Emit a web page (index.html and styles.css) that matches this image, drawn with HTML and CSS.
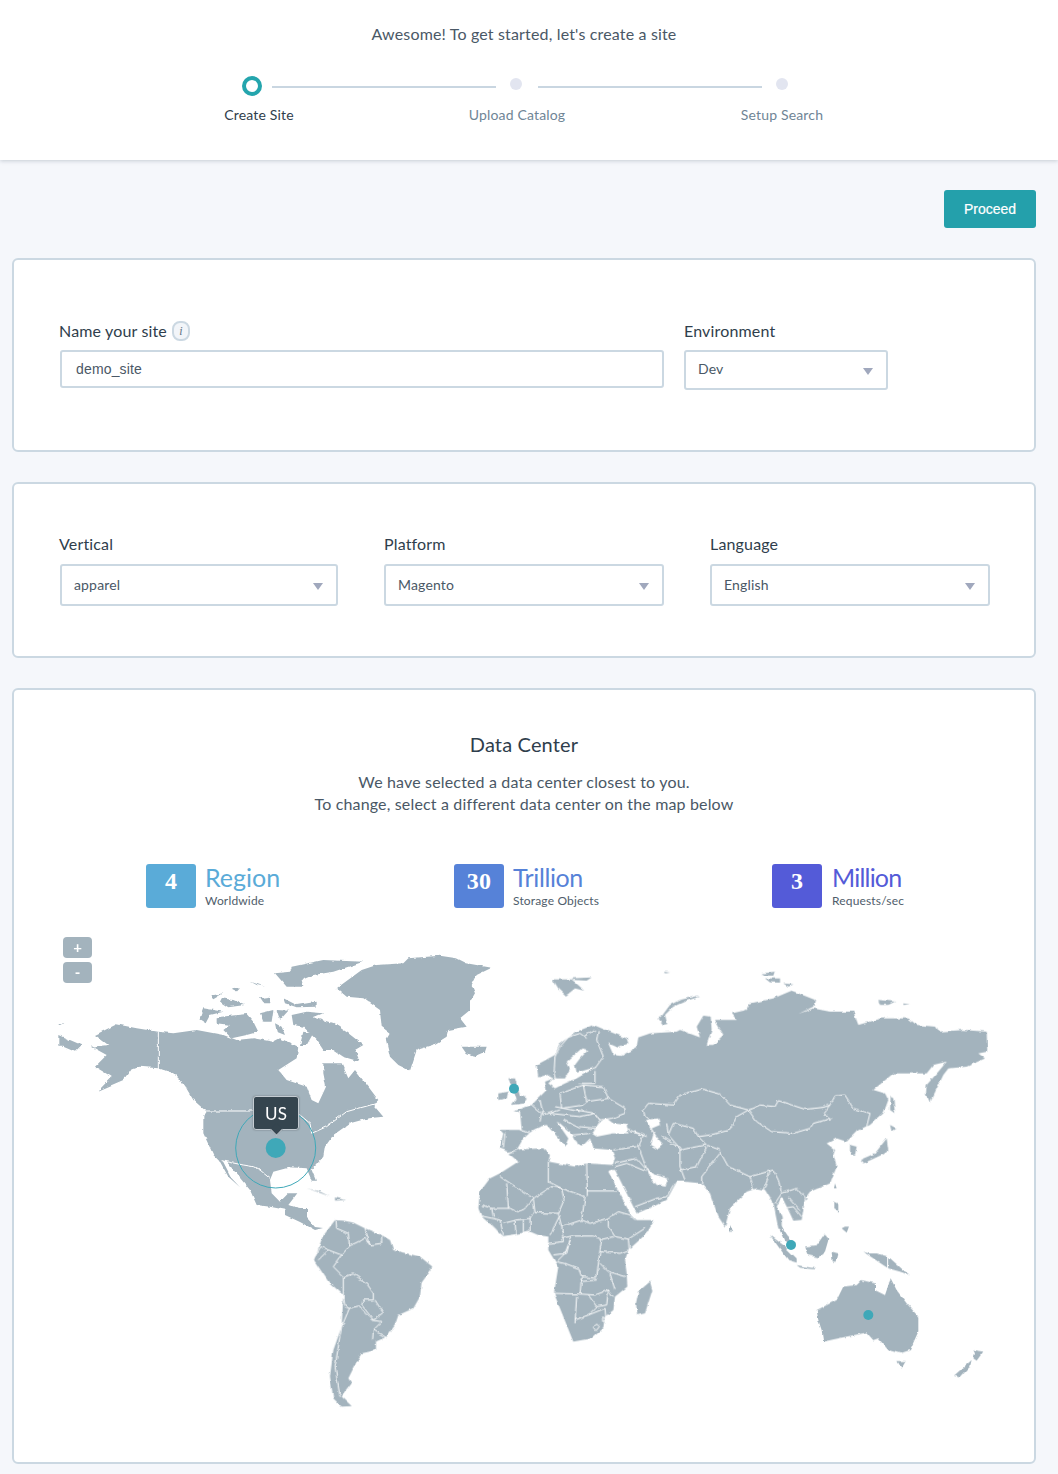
FILE: index.html
```html
<!DOCTYPE html>
<html lang="en">
<head>
<meta charset="utf-8">
<title>Create Site</title>
<link rel="stylesheet" href="styles.css">
</head>
<body>
<header class="top">
  <h1 class="intro">Awesome! To get started, let's create a site</h1>
  <div class="track">
    <span class="dot-active"></span>
    <span class="line"></span>
    <span class="dot"></span>
    <span class="line line-2"></span>
    <span class="dot"></span>
  </div>
  <div class="steps">
    <span class="step step-on">Create Site</span>
    <span class="step step-b">Upload Catalog</span>
    <span class="step step-c">Setup Search</span>
  </div>
</header>
<main class="main">
  <div class="actions"><button class="proceed">Proceed</button></div>
  <section class="card card-name">
    <div class="row-name">
      <div>
        <div class="label label-first">Name your site <span class="info">i</span></div>
        <div class="input">demo_site</div>
      </div>
      <div>
        <div class="label">Environment</div>
        <div class="select select-env">Dev</div>
      </div>
    </div>
  </section>
  <section class="card card-meta">
    <div class="row-meta">
      <div><div class="label label-first">Vertical</div><div class="select select-tall">apparel</div></div>
      <div><div class="label">Platform</div><div class="select select-tall">Magento</div></div>
      <div><div class="label">Language</div><div class="select select-tall">English</div></div>
    </div>
  </section>
  <section class="card card-dc">
    <h2 class="dc-title">Data Center</h2>
    <p class="dc-text">We have selected a data center closest to you.<br>To change, select a different data center on the map below</p>
    <div class="stats">
      <div class="stat stat-a"><span class="badge">4</span><div><div class="big">Region</div><div class="small">Worldwide</div></div></div>
      <div class="stat stat-b"><span class="badge">30</span><div><div class="big">Trillion</div><div class="small">Storage Objects</div></div></div>
      <div class="stat stat-c"><span class="badge">3</span><div><div class="big">Million</div><div class="small">Requests/sec</div></div></div>
    </div>
    <div class="map-wrap">
      <button class="zoom zoom-in">+</button>
      <button class="zoom zoom-out">-</button>
      <svg class="map" viewBox="58 950 930 460" width="930" height="460" aria-label="World map">
        <defs>
          <filter id="rough" filterUnits="userSpaceOnUse" x="58" y="950" width="930" height="460" color-interpolation-filters="sRGB">
            <feTurbulence type="fractalNoise" baseFrequency="0.14" numOctaves="3" seed="7" result="n"/>
            <feDisplacementMap in="SourceGraphic" in2="n" scale="3.2" xChannelSelector="R" yChannelSelector="G"/>
          </filter>
        </defs>
        <g class="rough">
        <!-- Americas north: zoom-space A -->
        <g transform="translate(40 930) scale(.33333)">
          <path class="land" d="M165,315 L230,283 L290,295 L355,305 L400,310 L470,300 L550,315 L590,330 L640,325 L700,335 L720,325 L775,350 L770,385 L715,420 L740,450 L800,470 L815,510 L835,520 L858,470 L850,430 L850,400 L905,400 L925,445 L945,420 L985,470 L1015,510 L1000,525 L1030,560 L985,565 L930,580 L880,615 L855,650 L850,680 L815,720 L828,752 L815,752 L800,715 L750,712 L700,725 L690,750 L695,790 L720,815 L745,790 L772,790 L745,825 L790,840 L740,840 L690,830 L650,825 L630,780 L605,750 L560,695 L548,692 L575,745 L600,772 L565,740 L540,695 L520,675 L490,610 L490,560 L500,545 L460,510 L430,460 L400,430 L355,415 L300,410 L275,415 L250,450 L175,482 L215,440 L165,410 L200,375 L155,350 L205,345 Z"/>
          <path class="land" d="M55,315 L125,345 L105,365 L70,350 L55,350 Z"/>
          <path class="land" d="M55,279 L70,280 L60,285 Z"/>
          <path class="land" d="M890,175 L965,120 L1010,105 L1090,100 L1105,85 L1200,77 L1250,85 L1280,100 L1355,113 L1310,135 L1295,165 L1305,190 L1290,215 L1290,240 L1260,265 L1280,290 L1225,300 L1220,320 L1180,345 L1130,360 L1110,422 L1075,405 L1050,380 L1038,330 L1050,310 L1025,290 L1020,240 L970,205 L920,200 Z"/>
          <path class="land" d="M755,110 L850,90 L970,95 L880,125 L820,135 L785,150 L790,170 L740,170 L705,130 L750,125 Z"/>
          <path class="land" d="M730,205 L770,225 L830,215 L830,230 L770,232 L735,220 Z"/>
          <path class="land" d="M660,205 L690,200 L690,220 L670,220 Z"/>
          <path class="land" d="M545,205 L580,210 L615,225 L565,232 L540,215 Z"/>
          <path class="land" d="M510,197 L550,190 L520,208 Z"/>
          <path class="land" d="M632,155 L675,170 L650,165 Z"/>
          <path class="land" d="M575,178 L600,175 L590,185 Z"/>
          <path class="land" d="M490,235 L550,245 L510,255 L497,280 L478,268 Z"/>
          <path class="land" d="M530,262 L620,252 L640,275 L655,305 L620,315 L575,325 L550,300 L570,285 L530,280 Z"/>
          <path class="land" d="M660,250 L700,240 L695,275 L670,275 Z"/>
          <path class="land" d="M710,240 L745,242 L720,270 Z"/>
          <path class="land" d="M755,255 L800,245 L850,250 L820,262 L880,280 L925,310 L970,345 L945,360 L960,395 L910,380 L880,360 L850,360 L830,330 L790,290 L760,285 Z"/>
          <path class="land" d="M705,280 L725,290 L735,315 L710,305 Z"/>
          <path class="land" d="M790,305 L820,310 L800,345 L780,345 Z"/>
          <path class="land" d="M1265,350 L1340,350 L1335,365 L1300,380 L1280,372 Z"/>
          <path class="water" d="M780,360 L805,375 L785,385 Z"/>
          <path class="border" d="M355,305 L355,418 L395,430 L440,475 M495,543 L640,543 L780,555 L810,580 L815,610 L860,590 L920,545 L1010,520 M545,692 L610,705 L640,710 L660,720 L690,745"/>
        </g>
        <!-- Central America and Caribbean: page space -->
        <path class="land" d="M285,1205 L300,1208 L307,1208 L307,1218 L315,1227 L323,1228 L315,1230 L300,1222 L285,1215 Z"/>
        <g transform="translate(300 1140) scale(.33333)">
          <path class="land" d="M20,145 L60,155 L90,170 L50,155 Z"/>
          <path class="land" d="M105,172 L135,180 L105,182 Z"/>
          <!-- South America -->
          <path class="land" d="M105,240 L130,242 L160,248 L195,265 L245,285 L270,300 L280,330 L360,350 L397,380 L365,425 L360,470 L340,505 L295,525 L285,555 L260,590 L228,605 L228,630 L185,640 L170,665 L145,715 L155,730 L125,770 L155,798 L125,800 L100,775 L90,710 L100,630 L125,560 L130,465 L85,425 L42,360 L68,290 Z"/>
          <path class="border" d="M108,240 L110,265 L145,280 L148,318 L125,345 L85,330 L62,320 L45,350 M148,318 L195,295 L210,315 L245,310 M195,265 L210,315 M245,285 L245,310 M85,330 L55,360 M125,345 L100,380 L130,410 L130,465 L135,500 L148,505 L125,560 L105,680 L120,770 M130,410 L160,402 L200,430 L220,460 L220,480 L190,480 L185,495 L220,540 L250,520 L225,480 M148,505 L175,498 L215,540 L245,545 L220,570 L218,600 M220,570 L258,592"/>
          <!-- Africa -->
          <path class="land" d="M540,155 L570,115 L600,100 L655,65 L625,40 L660,28 L730,25 L750,45 L745,65 L825,80 L860,70 L945,75 L925,95 L990,220 L1010,240 L1063,240 L1040,280 L985,330 L975,360 L980,400 L982,440 L945,470 L940,510 L915,530 L910,565 L875,595 L820,605 L800,555 L790,530 L762,460 L775,380 L745,330 L745,290 L715,285 L690,275 L610,288 L590,270 L545,230 L535,205 Z"/>
          <path class="land" d="M1050,425 L1057,450 L1035,520 L1012,525 L1008,490 L1015,455 Z"/>
          <path class="border" d="M600,110 L700,175 L755,140 L785,145 M620,130 L625,205 M575,205 L630,205 L650,215 L672,208 L700,175 L705,218 L775,220 M785,145 L792,180 L775,220 L785,260 L845,240 L855,170 L785,145 M745,65 L745,125 L785,145 M860,70 L862,168 M862,153 L950,153 M845,240 L870,250 L925,235 L955,215 M925,260 L945,290 L985,297 L1035,265 M955,215 L990,225 L1005,240 M925,235 L925,260 M785,295 L815,288 L880,288 L905,298 M815,288 L795,340 L770,365 L800,372 L835,385 L845,410 L890,415 L900,330 L905,298 L940,290 M900,335 L960,340 L985,330 M985,297 L988,335 M900,370 L925,395 L975,410 M762,460 L840,462 L845,410 M840,462 L885,465 L925,450 L940,470 M840,425 L890,420 M930,400 L945,450 M830,470 L825,550 M865,465 L890,500 L865,525 L825,540 M925,450 L920,495 L890,500 M865,525 L915,505 L918,540 M545,195 L575,205 L580,230 M545,228 L600,240 L610,285 M610,250 L650,240 L690,235 L700,218 M645,240 L648,285 M670,240 L670,280 M690,235 L690,275 M750,285 L780,225 M745,310 L790,305 L785,260 M760,345 L800,340 L810,300 M570,250 L590,270"/>
          <path class="border" d="M880,562 L890,552 L898,560 L888,572 Z M908,530 L918,540 L908,545 Z"/>
        </g>
        <!-- Eurasia: zoom-space B -->
        <g transform="translate(480 950) scale(.33333)">
          <path class="land" d="M170,345 L225,315 L240,280 L290,245 L340,225 L365,235 L440,265 L445,280 L415,293 L385,280 L400,315 L425,318 L470,290 L475,262 L510,250 L590,245 L600,240 L660,262 L650,230 L670,197 L692,200 L695,240 L680,285 L700,285 L730,255 L705,210 L770,210 L755,190 L800,180 L810,160 L880,145 L935,122 L1005,150 L1000,170 L955,192 L1000,175 L1050,185 L1120,185 L1135,225 L1205,205 L1285,205 L1310,225 L1365,230 L1375,245 L1450,240 L1520,245 L1522,305 L1495,310 L1515,325 L1460,350 L1405,355 L1390,375 L1350,458 L1338,430 L1340,405 L1375,365 L1400,335 L1360,345 L1340,370 L1240,370 L1180,420 L1215,430 L1225,450 L1210,490 L1170,525 L1130,545 L1100,575 L1070,565 L1040,580 L1065,600 L1060,615 L1070,650 L1050,700 L990,725 L975,745 L965,810 L940,812 L925,780 L905,740 L890,770 L905,800 L905,840 L895,835 L880,760 L855,720 L830,715 L800,725 L750,775 L735,830 L715,800 L690,730 L665,700 L615,695 L590,695 L560,750 L530,765 L470,790 L405,660 L385,660 L400,640 L405,625 L395,600 L340,595 L330,565 L305,590 L295,585 L280,555 L240,520 L230,515 L265,565 L255,590 L240,570 L200,525 L180,530 L160,540 L130,565 L110,600 L85,605 L60,595 L70,550 L60,540 L125,540 L120,485 L100,485 L155,465 L200,420 L195,395 L220,385 L200,375 L175,382 Z"/>
          <path class="water" d="M305,295 L325,300 L300,325 L285,345 L290,368 L350,350 L320,368 L290,385 L255,400 L225,415 L205,400 L220,385 L255,385 L270,355 L260,335 Z"/>
          <path class="water" d="M355,520 L380,505 L400,520 L440,525 L445,550 L400,550 L350,560 L335,550 Z"/>
          <path class="water" d="M495,510 L535,505 L540,525 L515,535 L530,560 L550,585 L535,600 L510,585 L520,550 Z"/>
          <path class="water" d="M500,655 L525,675 L565,685 L555,710 L530,705 L510,680 Z"/>
          <path class="land" d="M218,88 L275,88 L300,110 L312,122 L285,115 L258,137 L235,115 Z"/>
          <path class="land" d="M275,85 L335,82 L320,92 L280,90 Z"/>
          <path class="land" d="M552,65 L570,68 L555,70 Z"/>
          <path class="land" d="M845,70 L885,65 L880,77 L850,77 Z"/>
          <path class="land" d="M855,85 L900,85 L900,98 L870,97 Z"/>
          <path class="land" d="M910,100 L940,103 L925,110 Z"/>
          <path class="land" d="M655,137 L600,150 L570,165 L548,195 L535,205 L550,225 L562,222 L555,195 L580,170 L620,152 L660,140 Z"/>
          <path class="land" d="M1195,150 L1245,155 L1225,165 L1200,165 Z"/>
          <path class="land" d="M1270,160 L1290,163 L1270,165 Z"/>
          <path class="land" d="M1232,440 L1240,445 L1245,490 L1230,480 Z"/>
          <path class="land" d="M1140,630 L1185,610 L1220,565 L1225,600 L1205,615 L1150,640 Z"/>
          <path class="land" d="M1230,525 L1250,535 L1235,545 Z"/>
          <path class="land" d="M1110,585 L1130,590 L1125,615 L1110,610 Z"/>
          <path class="land" d="M85,385 L105,385 L120,435 L140,445 L135,460 L95,465 L110,445 Z"/>
          <path class="land" d="M55,430 L85,425 L80,445 L55,450 Z"/>
          <path class="border" d="M225,320 L240,290 L265,262 L300,250 L320,265 M355,240 L350,270 L370,320 L345,355 M310,260 L345,240 M225,320 L222,370 L230,400 M345,360 L345,400 L295,400 M310,405 L370,410 L385,445 L320,455 M385,445 L435,475 L435,490 L395,505 L360,510 L345,490 L290,480 M240,430 L245,475 L310,465 L320,455 L310,405 L240,430 M180,450 L190,495 L240,480 M155,465 L185,490 L180,515 M120,540 L160,552 M75,550 L70,595 M225,470 L300,485 M210,490 L300,500 M250,510 L300,535 M300,500 L345,490 L360,510 L345,535 L300,530 M280,555 L330,550 M450,545 L490,555 L475,590 M400,600 L470,590 M440,535 L500,560 M490,480 L505,460 L580,465 L600,435 L665,417 L720,432 L750,465 L805,480 M490,480 L495,500 L510,510 M560,520 L565,555 L580,520 L640,535 L655,560 L690,555 L750,540 L770,500 L805,480 M805,480 L840,465 L885,470 L895,452 L935,465 L975,478 L1030,472 L1050,465 L1065,438 L1095,435 L1120,475 L1170,490 L1160,530 L1130,545 M805,480 L830,515 L875,545 L940,550 L990,535 L1000,520 L1055,505 L1030,490 L1050,465 M475,590 L490,630 L500,660 M545,560 L600,595 L600,650 L615,690 M600,600 L650,590 L680,585 L720,600 M600,660 L650,650 L680,590 M565,555 L600,595 M655,560 L680,585 M720,610 L700,635 L665,680 L665,700 M720,605 L745,650 L810,680 L880,660 L895,690 M810,680 L820,720 M850,720 L870,665 M895,690 L905,730 L885,760 M905,730 L950,715 L975,745 M890,760 L910,775 L940,770 L965,800 M925,740 L960,780 M405,640 L470,625 L500,660 M405,650 L440,640 L500,665 M465,770 L530,745 L560,740 L580,705"/>
        </g>
        <!-- SE Asia and Oceania: zoom-space C -->
        <g transform="translate(700 1150) scale(.33333)">
          <path class="land" d="M235,222 L245,228 L262,255 L285,280 L270,285 L255,270 Z"/>
          <path class="land" d="M90,225 L100,245 L90,245 Z"/>
          <path class="land" d="M405,100 L410,115 L402,115 Z"/>
          <path class="land" d="M315,145 L325,145 L318,150 Z"/>
          <path class="land" d="M403,155 L415,160 L415,185 L403,178 Z"/>
          <path class="land" d="M435,230 L447,230 L440,248 L425,235 Z"/>
          <path class="land" d="M315,290 L350,285 L375,250 L385,270 L375,305 L355,322 L325,315 Z"/>
          <path class="land" d="M210,255 L250,285 L290,325 L290,338 L265,330 L235,290 Z"/>
          <path class="land" d="M290,345 L345,355 L340,358 L300,353 Z"/>
          <path class="land" d="M395,305 L415,310 L410,335 L398,335 Z"/>
          <path class="land" d="M490,305 L505,310 L530,310 L565,320 L610,360 L630,375 L600,365 L565,355 L550,345 L520,325 L505,315 Z"/>
          <path class="border" d="M563,318 L563,365"/>
          <path class="land" d="M350,480 L410,450 L430,410 L470,405 L485,390 L525,400 L525,420 L555,435 L572,385 L590,420 L620,460 L655,500 L655,545 L630,600 L600,610 L565,600 L535,565 L520,570 L500,548 L440,560 L370,575 L365,540 L355,510 Z"/>
          <path class="land" d="M592,633 L617,633 L605,655 Z"/>
          <path class="land" d="M762,677 L815,630 L810,650 L780,683 Z"/>
          <path class="land" d="M820,600 L850,605 L830,632 L820,625 L825,610 Z"/>
        </g>
        </g>
        <circle class="pin-ring" cx="275.7" cy="1148" r="40"/>
        <circle class="pin" cx="275.7" cy="1148" r="10"/>
        <circle class="pin" cx="514" cy="1088.7" r="5"/>
        <circle class="pin" cx="791" cy="1245" r="5"/>
        <circle class="pin" cx="868.3" cy="1315" r="5"/>
      </svg>
      <div class="tip">US</div>
    </div>
  </section>
</main>
</body>
</html>
```

FILE: styles.css
```css
* { box-sizing: border-box; }
html, body { margin: 0; padding: 0; }
body {
  background: #f5f7fb;
  font-family: "Lato", "Noto Sans", sans-serif;
  letter-spacing: .16px;
  color: #2f3e4c;
}
.top {
  height: 160px;
  background: #fff;
  box-shadow: 0 1px 4px rgba(90, 105, 125, .3);
  padding-top: 24px;
  position: relative;
}
.intro {
  margin: 0;
  height: 20px;
  font-size: 16px;
  line-height: 20px;
  font-weight: 400;
  text-align: center;
  color: #4a5866;
  padding-right: 10px;
}
.track {
  display: flex;
  align-items: flex-start;
  padding-left: 242px;
  margin-top: 32px;
  height: 20px;
}
.dot-active {
  width: 20px;
  height: 20px;
  border: 4px solid #24a5ad;
  border-radius: 50%;
  background: #fff;
}
.line {
  width: 224px;
  height: 2px;
  margin: 10px 14px 0 10px;
  background: #c9d6e1;
}
.line-2 { margin-left: 16px; }
.dot {
  width: 12px;
  height: 12px;
  margin-top: 2px;
  border-radius: 50%;
  background: #e2e5f0;
}
.steps {
  display: flex;
  padding-left: 199px;
  margin-top: 9px;
}
.step {
  width: 120px;
  font-size: 14px;
  line-height: 20px;
  text-align: center;
  color: #6f8596;
}
.step-on { color: #2f3e4c; }
.step-b { margin-left: 138px; }
.step-c { margin-left: 145px; }
.main { padding: 30px 22px 10px 12px; }
.actions { display: flex; justify-content: flex-end; margin-bottom: 30px; }
.proceed {
  width: 92px;
  height: 38px;
  border: 0;
  border-radius: 3px;
  background: #24a0ab;
  color: #fff;
  font: 14px "Liberation Sans", Arial, sans-serif;
  -webkit-text-stroke: .2px #fff;
  padding: 0;
}
.card {
  background: #fff;
  border: 2px solid #cbd8e2;
  border-radius: 6px;
  margin-bottom: 30px;
}
.card-name { padding: 61px 46px 60px; }
.card-meta { padding: 50px 46px; }
.card-dc { padding: 40px 0 52px; margin-bottom: 0; }
.row-name { display: flex; gap: 20px; align-items: flex-start; }
.row-meta { display: grid; grid-template-columns: 278px 280px 280px; column-gap: 46px; }
.label {
  display: flex;
  align-items: center;
  gap: 5px;
  height: 20px;
  margin-bottom: 9px;
  font-size: 16px;
  line-height: 20px;
  color: #2f3e4c;
}
.label-first { margin-left: -1px; }
.card-meta .label { margin-bottom: 10px; }
.info {
  width: 18px;
  height: 20px;
  border: 2px solid #cbd8e2;
  border-radius: 8px;
  background: #f2f5f9;
  color: #5f7282;
  font: italic 12px/16px "Liberation Serif", serif;
  text-align: center;
}
.input {
  width: 604px;
  height: 38px;
  border: 2px solid #cbd8e2;
  border-radius: 3px;
  padding-left: 14px;
  font: 14px/34px "Liberation Sans", Arial, sans-serif;
  color: #4a5866;
}
.select {
  position: relative;
  border: 2px solid #cbd8e2;
  border-radius: 3px;
  padding-left: 12px;
  font-size: 14px;
  color: #4a5866;
}
.select::after {
  content: "";
  position: absolute;
  right: 13px;
  top: 50%;
  margin-top: -2px;
  border-style: solid;
  border-width: 7px 5px 0;
  border-color: #a0a8bd transparent transparent;
}
.select-env { width: 204px; height: 40px; line-height: 34px; }
.select-tall { height: 42px; line-height: 38px; }
.dc-title {
  margin: 0;
  font-size: 20px;
  line-height: 28px;
  font-weight: 400;
  text-align: center;
  color: #2f3e4c;
}
.dc-text {
  margin: 13px 0 0;
  font-size: 16px;
  line-height: 22px;
  text-align: center;
  color: #4a5866;
}
.stats {
  display: grid;
  grid-template-columns: 308px 318px auto;
  margin-top: 49px;
  padding-left: 132px;
}
.stat { display: flex; align-items: flex-start; gap: 9px; }
.stat-c { gap: 10px; }
.badge {
  width: 50px;
  height: 44px;
  border-radius: 3px;
  color: #fff;
  font: 700 24px/35px "Liberation Serif", serif;
  text-align: center;
}
.stat-a .badge { background: #5aabd8; }
.stat-b .badge { background: #5682d8; }
.stat-c .badge { background: #545bd8; }
.big { font-size: 25px; line-height: 27px; letter-spacing: 0; }
.stat-a .big { color: #5aabd8; }
.stat-b .big { color: #5682d8; letter-spacing: -.4px; }
.stat-c .big { color: #545bd8; letter-spacing: -.8px; }
.small { font-size: 12px; line-height: 14px; margin-top: 3px; color: #4f5d6b; }
.map-wrap { position: relative; margin-top: 29px; padding: 13px 0 0 44px; }
.map { display: block; }
.rough { filter: url(#rough); }
.land { fill: #a3b3bd; }
.water { fill: #fff; }
.border { fill: none; stroke: #fff; stroke-width: 3; stroke-linejoin: round; }
.pin { fill: #3fa8b8; }
.pin-ring { fill: none; stroke: #3fa8b8; stroke-width: 1; }
.zoom {
  position: absolute;
  left: 49px;
  width: 29px;
  height: 21px;
  padding: 0;
  border: 0;
  border-radius: 4px;
  background: #a3b3bd;
  color: #fff;
  font: 700 15px/21px "Lato", sans-serif;
}
.zoom-in { top: 0; }
.zoom-out { top: 25px; }
.tip {
  position: absolute;
  left: 239px;
  top: 159px;
  width: 46px;
  height: 34px;
  border: 1px solid #c4ccd2;
  border-radius: 3px;
  background: #35454f;
  color: #fff;
  font-size: 17px;
  line-height: 33px;
  text-align: center;
  box-shadow: 0 0 2px rgba(0, 0, 0, .35);
}
.tip::after {
  content: "";
  position: absolute;
  left: 18px;
  bottom: -5px;
  width: 8px;
  height: 8px;
  background: #35454f;
  border-right: 1px solid #c4ccd2;
  border-bottom: 1px solid #c4ccd2;
  transform: rotate(45deg);
}
```
